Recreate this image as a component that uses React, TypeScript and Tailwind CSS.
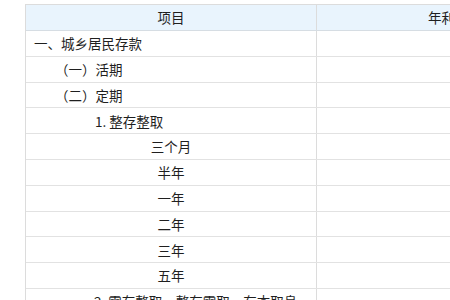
import React from 'react'

interface Row {
  label: string
  align: 'left' | 'center'
  indent?: string
}

const rows: Row[] = [
  { label: '一、城乡居民存款', align: 'left', indent: 'pl-[8px]' },
  { label: '（一）活期', align: 'left', indent: 'pl-[29px]' },
  { label: '（二）定期', align: 'left', indent: 'pl-[29px]' },
  { label: '1. 整存整取', align: 'left', indent: 'pl-[69px]' },
  { label: '三个月', align: 'center' },
  { label: '半年', align: 'center' },
  { label: '一年', align: 'center' },
  { label: '二年', align: 'center' },
  { label: '三年', align: 'center' },
  { label: '五年', align: 'center' },
  { label: '2. 零存整取、整存零取、存本取息', align: 'left', indent: 'pl-[68px]' },
]

export default function App() {
  return (
    <div
      className="w-[450px] h-[300px] overflow-hidden bg-white text-[13.5px] text-[#1f1f1f]"
      style={{ fontFamily: '"Noto Sans CJK SC", "Noto Sans", sans-serif' }}
    >
      <div className="mt-[4px] ml-[25px] w-[600px] border-l border-t border-[#dcdcdc]">
        <div className="flex h-[26px] bg-[#e9f4fd] border-b border-[#d6dde3]">
          <div className="w-[291px] flex items-center justify-center border-r border-[#dcdcdc]">项目</div>
          <div className="w-[300px] flex items-center justify-center pl-[2px]">年利率（%）</div>
        </div>
        {rows.map(r => (
          <div key={r.label} className="flex h-[25.8px] border-b border-[#e2e2e2]">
            <div
              className={`w-[291px] flex items-center border-r border-[#dcdcdc] whitespace-nowrap ${
                r.align === 'center' ? 'justify-center' : 'justify-start'
              } ${r.indent ?? ''}`}
            >
              {r.label}
            </div>
            <div className="w-[300px]" />
          </div>
        ))}
      </div>
    </div>
  )
}
